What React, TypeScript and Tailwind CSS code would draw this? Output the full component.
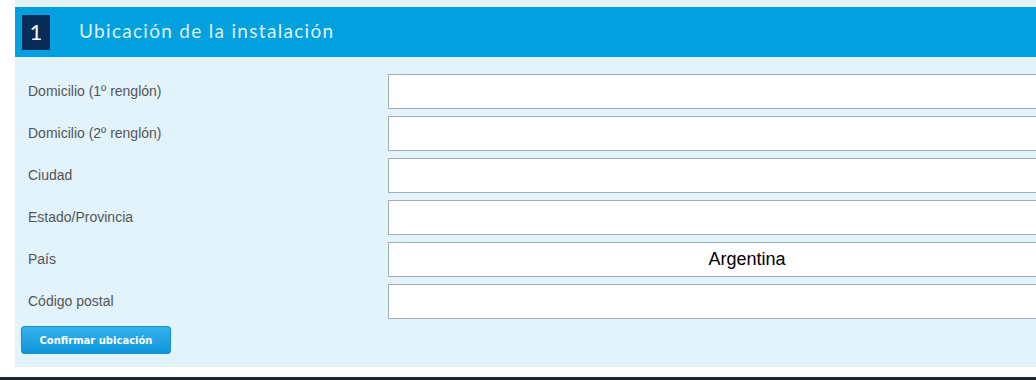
import React from "react";

const rows = [
  { label: "Domicilio (1º renglón)", value: "" },
  { label: "Domicilio (2º renglón)", value: "" },
  { label: "Ciudad", value: "" },
  { label: "Estado/Provincia", value: "" },
  { label: "País", value: "Argentina" },
  { label: "Código postal", value: "" },
];

export default function App() {
  return (
    <div className="w-[1036px] h-[380px] overflow-hidden bg-white relative">
      <div className="ml-[15px] w-[1120px] bg-[#e2f3fc] pt-[7px] pb-[13px]">
        <div className="h-[50px] bg-[#03a0df] flex items-center pl-[7px]">
          <div className="w-[28px] h-[35px] bg-[#072c57] flex items-center justify-center text-white text-[22px] font-['Lato',sans-serif] leading-none">
            1
          </div>
          <div className="ml-[29px] mb-[3px] text-[19px] text-[#def3fc] font-['Lato',sans-serif] font-normal tracking-[1.3px] leading-none">
            Ubicación de la instalación
          </div>
        </div>
        <div className="pt-[17px] flex flex-col gap-[7px]">
          {rows.map((r) => (
            <div key={r.label} className="flex items-center h-[35px]">
              <div className="w-[373px] pl-[13px] text-[14px] text-[#555555] font-['Liberation_Sans',Arial,sans-serif]">
                {r.label}
              </div>
              <div className="w-[718px] h-[35px] bg-white border border-[#a3adb5] flex items-center justify-center text-[18px] text-black font-['Liberation_Sans',Arial,sans-serif]">
                {r.value}
              </div>
            </div>
          ))}
          <div className="pl-[6px]">
            <button className="w-[150px] h-[28px] rounded-[3px] bg-gradient-to-b from-[#33b2ee] to-[#0c95db] border border-[#1191d3] text-white text-[10px] font-bold font-['DejaVu_Sans',Verdana,sans-serif] flex items-center justify-center">
              Confirmar ubicación
            </button>
          </div>
        </div>
      </div>
      <div className="absolute left-0 top-[377px] w-full h-[3px] bg-[#1c2834]" />
    </div>
  );
}
